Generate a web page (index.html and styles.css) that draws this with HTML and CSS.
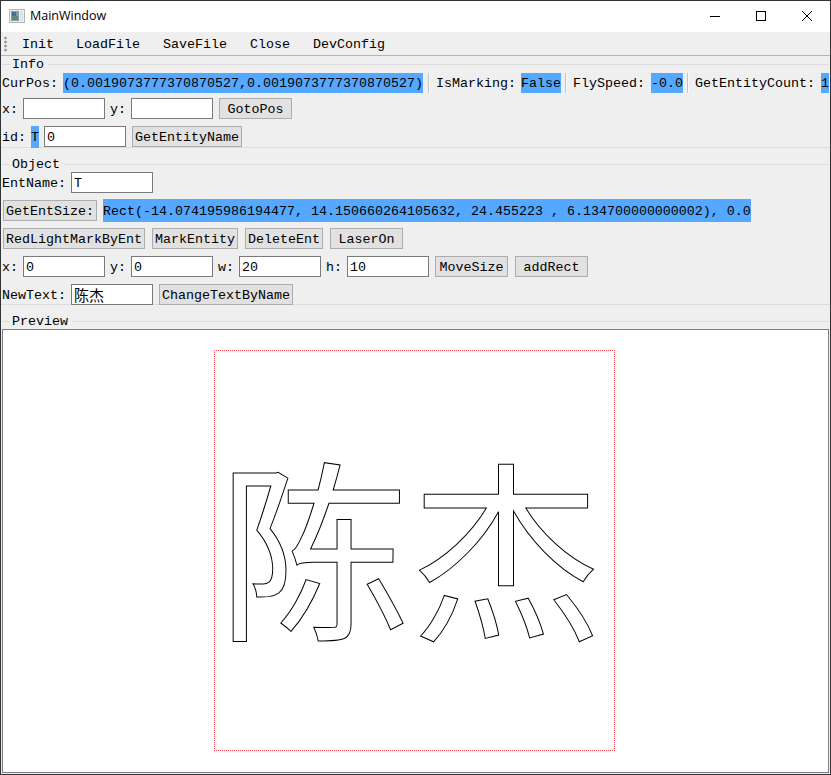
FILE: index.html
```html
<!DOCTYPE html>
<html lang="en">
<head>
    <meta charset="UTF-8">
    <meta name="viewport" content="width=device-width, initial-scale=1.0">
    <title>MainWindow</title>
    <link rel="stylesheet" href="styles.css">
</head>
<body>
    <div class="window">
        <!-- Title bar -->
        <div class="titlebar">
            <svg class="app-icon" width="16" height="16" viewBox="0 0 16 16">
                <rect x="0.5" y="1.5" width="15" height="13" fill="#f0f0f0" stroke="#b4b4b4"/>
                <rect x="2" y="3" width="8" height="10" fill="#7f9fa0"/>
                <rect x="3" y="4" width="4" height="4" fill="#44708f"/>
                <rect x="3" y="8" width="6" height="4" fill="#5f8a78"/>
                <rect x="11" y="3" width="3" height="10" fill="#dde3e8"/>
            </svg>
            <span class="title-text">MainWindow</span>
            <div class="win-buttons">
                <svg class="win-btn" width="46" height="30" viewBox="0 0 46 30"><path d="M18 15.5H28" stroke="#000" fill="none"/></svg>
                <svg class="win-btn" width="46" height="30" viewBox="0 0 46 30"><rect x="18.5" y="10.5" width="9" height="9" stroke="#000" fill="none"/></svg>
                <svg class="win-btn" width="46" height="30" viewBox="0 0 46 30"><path d="M18 10L28 20M28 10L18 20" stroke="#000" fill="none"/></svg>
            </div>
        </div>

        <!-- Toolbar -->
        <div class="toolbar">
            <span class="grip"></span>
            <span class="tool tool-first">Init</span>
            <span class="tool">LoadFile</span>
            <span class="tool">SaveFile</span>
            <span class="tool">Close</span>
            <span class="tool">DevConfig</span>
        </div>

        <!-- Info -->
        <div class="group group-info">
            <div class="group-title"><span>Info</span></div>
            <div class="row row-status">
                <span class="lbl-auto">CurPos:</span>
                <span class="sel sel-pos">(0.0019073777370870527,0.0019073777370870527)</span>
                <span class="sep"></span>
                <span class="lbl-auto">IsMarking:</span>
                <span class="sel sel-false">False</span>
                <span class="sep"></span>
                <span class="lbl-auto">FlySpeed:</span>
                <span class="sel">-0.0</span>
                <span class="sep"></span>
                <span class="lbl-auto">GetEntityCount:</span>
                <span class="sel">1</span>
            </div>
            <div class="row">
                <span class="lbl">x:</span><input class="field" type="text">
                <span class="lbl">y:</span><input class="field" type="text">
                <button class="btn btn-goto">GotoPos</button>
            </div>
            <div class="row">
                <span class="lbl-auto">id:</span><span class="sel sel-id">T</span><input class="field" type="text" value="0">
                <button class="btn btn-name">GetEntityName</button>
            </div>
        </div>

        <!-- Object -->
        <div class="group group-object">
            <div class="group-title"><span>Object</span></div>
            <div class="row">
                <span class="lbl-wide">EntName:</span><input class="field" type="text" value="T">
            </div>
            <div class="row">
                <button class="btn btn-size">GetEntSize:</button>
                <span class="sel sel-rect">Rect(-14.074195986194477, 14.150660264105632, 24.455223 , 6.134700000000002), 0.0</span>
            </div>
            <div class="row">
                <button class="btn btn-red">RedLightMarkByEnt</button>
                <button class="btn btn-mark">MarkEntity</button>
                <button class="btn btn-del">DeleteEnt</button>
                <button class="btn btn-laser">LaserOn</button>
            </div>
            <div class="row">
                <span class="lbl">x:</span><input class="field" type="text" value="0">
                <span class="lbl">y:</span><input class="field" type="text" value="0">
                <span class="lbl">w:</span><input class="field" type="text" value="20">
                <span class="lbl">h:</span><input class="field" type="text" value="10">
                <button class="btn btn-move">MoveSize</button>
                <button class="btn btn-add">addRect</button>
            </div>
            <div class="row">
                <span class="lbl-wide">NewText:</span><input class="field field-cjk" type="text" value="陈杰">
                <button class="btn btn-change">ChangeTextByName</button>
            </div>
        </div>

        <!-- Preview -->
        <div class="group group-preview">
            <div class="group-title"><span>Preview</span></div>
            <div class="canvas">
                <div class="mark-area">
                    <span class="outline">陈杰</span>
                </div>
            </div>
        </div>
    </div>
</body>
</html>
```

FILE: styles.css
```css
* {
    box-sizing: border-box;
}

html, body {
    margin: 0;
    padding: 0;
    width: 831px;
    height: 775px;
    overflow: hidden;
}

body {
    font-family: "Liberation Mono", "Noto Sans CJK SC", monospace;
    font-size: 13.33px;
    color: #000;
    background-color: #333;
}

.window {
    width: 831px;
    height: 775px;
    border: 1px solid #2f3437;
    background-color: #efefef;
    display: flex;
    flex-direction: column;
}

.titlebar {
    height: 31px;
    padding-bottom: 2px;
    background-color: #fff;
    display: flex;
    align-items: center;
    font-family: "Open Sans", "Noto Sans", sans-serif;
    font-size: 12.5px;
    flex: none;
}

.app-icon {
    margin-left: 8px;
}

.title-text {
    margin-left: 5px;
}

.win-buttons {
    margin-left: auto;
    display: flex;
}

.toolbar {
    height: 24px;
    padding-top: 1px;
    display: flex;
    align-items: center;
    border-bottom: 1px solid #b4b4b4;
    flex: none;
}

.grip {
    width: 3px;
    height: 16px;
    margin-left: 3px;
    margin-right: 15px;
    background-image: radial-gradient(#a0a0a0 50%, transparent 55%);
    background-size: 3px 4px;
}

.tool {
    margin-right: 23px;
}

.tool-first {
    margin-right: 22px;
}

.group {
    flex: none;
    padding: 0 1px;
}

.group-title {
    height: 16px;
    display: flex;
    align-items: center;
}

.group-title::before {
    content: "";
    width: 8px;
    border-top: 1px solid #dcdcdc;
}

.group-title::after {
    content: "";
    flex: 1;
    border-top: 1px solid #dcdcdc;
}

.group-title span {
    padding: 1px 4px 0 2px;
}

.group-info {
    height: 92px;
    border-bottom: 1px solid #dcdcdc;
    margin-bottom: 8px;
}

.group-object {
    height: 149px;
    border-bottom: 1px solid #dcdcdc;
    margin-bottom: 8px;
}

.group-preview {
    flex: 1;
    display: flex;
    flex-direction: column;
}

.row {
    height: 21px;
    margin-top: 7px;
    display: flex;
    align-items: center;
    white-space: nowrap;
}

.group-title + .row {
    margin-top: 0;
}

.row-status {
    margin-bottom: -2px;
}

.lbl,
.lbl-auto,
.lbl-wide {
    padding-top: 2px;
}

.lbl {
    width: 21px;
}

.lbl + .field + .lbl {
    margin-left: 5px;
}

.lbl-wide {
    width: 69px;
}

.field {
    width: 82px;
    height: 21px;
    border: 1px solid #7a7a7a;
    background-color: #fff;
    padding: 2px 2px 0;
    margin: 0;
    font: inherit;
    color: #000;
    outline: none;
    border-radius: 0;
}

.field-cjk {
    font-family: "Noto Sans CJK SC", sans-serif;
    font-size: 15px;
    padding-top: 0;
}

.btn {
    height: 21px;
    margin: 0 0 0 6px;
    padding: 2px 0 0;
    border: 1px solid #adadad;
    background-color: #e1e1e1;
    font: inherit;
    color: #000;
    border-radius: 0;
}

.sel {
    background-color: #55a8ff;
    height: 20px;
    padding-top: 1px;
    line-height: 20px;
    margin-left: 6px;
    flex: none;
}

.sel-pos {
    margin-left: 5px;
    margin-right: 1px;
    width: 360px;
}

.sel-false {
    margin-left: 5px;
}

.sep {
    width: 2px;
    height: 20px;
    margin: 0 6px 0 4px;
    background-color: #c4c4c4;
    border-right: 1px solid #fafafa;
}

.sel-id {
    height: 22px;
    line-height: 22px;
    width: 8px;
    margin-left: 5px;
    margin-right: 5px;
}

.sel-rect {
    height: 23px;
    line-height: 23px;
}

.btn-goto { width: 73px; }
.btn-name { width: 110px; }
.btn-size { width: 94px; margin-left: 1px; }
.btn-red { width: 142px; margin-left: 1px; }
.btn-mark { width: 86px; margin-left: 7px; }
.btn-del { width: 78px; margin-left: 7px; }
.btn-laser { width: 73px; margin-left: 7px; }
.btn-move { width: 73px; }
.btn-add { width: 73px; margin-left: 7px; }
.btn-change { width: 134px; }

.canvas {
    flex: 1;
    margin-bottom: 1px;
    border: 1px solid #7e7e7e;
    background-color: #fff;
    display: flex;
    align-items: center;
    justify-content: center;
}

.mark-area {
    width: 401px;
    height: 401px;
    margin: 0 2px 2px 0;
    border: 1px dotted #f4505a;
    display: flex;
    align-items: center;
    justify-content: center;
}

.outline {
    font-family: "Noto Sans CJK SC", sans-serif;
    font-size: 192px;
    line-height: 1;
    margin-right: 9px;
    margin-bottom: 17px;
    color: #fff;
    -webkit-text-stroke: 1px #000;
    white-space: nowrap;
}
```
